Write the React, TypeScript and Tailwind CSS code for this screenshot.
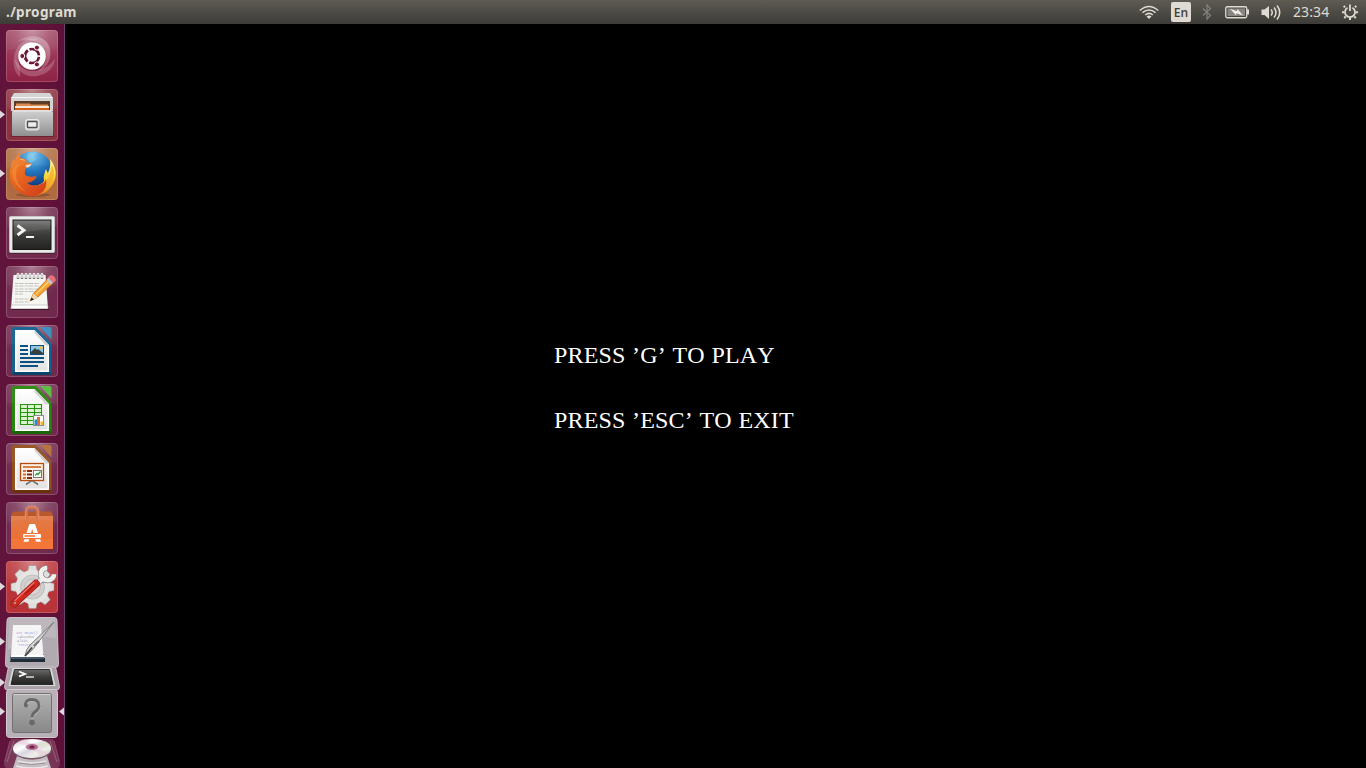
import type { ReactNode } from "react";

function Defs() {
  return (
    <svg className="absolute h-0 w-0" aria-hidden="true">
      <defs>
        <linearGradient id="silver" x1="0" y1="0" x2="0" y2="1">
          <stop offset="0" stopColor="#d2d2d2" />
          <stop offset="1" stopColor="#909090" />
        </linearGradient>
        <linearGradient id="paper" x1="0" y1="0" x2="0" y2="1">
          <stop offset="0" stopColor="#ffffff" />
          <stop offset="1" stopColor="#e2e2e2" />
        </linearGradient>
        <linearGradient id="screen" x1="0" y1="0" x2="0" y2="1">
          <stop offset="0" stopColor="#6a6a68" />
          <stop offset="0.5" stopColor="#3c3c3a" />
          <stop offset="1" stopColor="#222221" />
        </linearGradient>
        <radialGradient id="gloss" cx="0.5" cy="0" r="0.65">
          <stop offset="0" stopColor="#fff" stopOpacity="0.38" />
          <stop offset="0.5" stopColor="#fff" stopOpacity="0.12" />
          <stop offset="1" stopColor="#fff" stopOpacity="0" />
        </radialGradient>
        <radialGradient id="globe" cx="0.5" cy="0.1" r="0.75">
          <stop offset="0" stopColor="#72c4ee" />
          <stop offset="0.5" stopColor="#2579c0" />
          <stop offset="1" stopColor="#0c3a80" />
        </radialGradient>
        <linearGradient id="fox" x1="0" y1="0" x2="0.7" y2="1">
          <stop offset="0" stopColor="#f18a30" />
          <stop offset="0.45" stopColor="#ea6a20" />
          <stop offset="1" stopColor="#d3431c" />
        </linearGradient>
        <linearGradient id="flame" x1="0" y1="0" x2="0" y2="1">
          <stop offset="0" stopColor="#fff3a0" />
          <stop offset="0.5" stopColor="#fbd538" />
          <stop offset="1" stopColor="#ee7820" />
        </linearGradient>
        <linearGradient id="bag" x1="0" y1="0" x2="0" y2="1">
          <stop offset="0" stopColor="#e07b48" />
          <stop offset="1" stopColor="#f06c2c" />
        </linearGradient>
        <linearGradient id="dashBase" x1="0" y1="0" x2="0" y2="1">
          <stop offset="0" stopColor="#a04a66" />
          <stop offset="0.5" stopColor="#9b3555" />
          <stop offset="1" stopColor="#8d2344" />
        </linearGradient>
        <linearGradient id="swirl" x1="0" y1="1" x2="1" y2="0">
          <stop offset="0" stopColor="#fff" stopOpacity="0.02" />
          <stop offset="1" stopColor="#fff" stopOpacity="0.38" />
        </linearGradient>
        <linearGradient id="question" x1="0" y1="0" x2="0" y2="1">
          <stop offset="0" stopColor="#b2b2b2" />
          <stop offset="1" stopColor="#888888" />
        </linearGradient>
        <linearGradient id="disc" x1="0" y1="0" x2="1" y2="1">
          <stop offset="0" stopColor="#d0d0d0" />
          <stop offset="0.35" stopColor="#ffffff" />
          <stop offset="0.5" stopColor="#d9d6e2" />
          <stop offset="0.7" stopColor="#f0f0e8" />
          <stop offset="1" stopColor="#c2c2c2" />
        </linearGradient>
      </defs>
    </svg>
  );
}

function Tile({ fill, opacity = 1, running = false, children }: { fill: string; opacity?: number; running?: boolean; children: ReactNode }) {
  return (
    <svg viewBox="0 0 64 52" className="block h-[52px] w-16 shrink-0">
      <rect x="6" y="0" width="52" height="52" rx="3.5" fill={fill} fillOpacity={opacity} />
      <rect x="6" y="0" width="52" height="52" rx="3.5" fill="url(#gloss)" />
      {children}
      <path d="M7 20V4q0-3.5 3.500-3.500h43q3.500 0 3.500 3.500v16Q32 14 7 20z" fill="#fff" fillOpacity="0.05" />
      <rect x="6.500" y="0.500" width="51" height="51" rx="3.500" fill="none" stroke="#fff" strokeOpacity="0.18" />
      {running && <path d="M0 21.500L5 25.500L0 29.500z" fill="#dcd8dc" />}
    </svg>
  );
}

function Dash() {
  return (
    <Tile fill="url(#dashBase)">
      <path d="M16 13C25 4 42 4 48 14C54 25 48 38 38 42C47 33 47 20 39 14C32 9 22 9 16 13z" fill="url(#swirl)" />
      <path d="M20 47C12 41 11 24 20 14C25 9 33 7 38 10C27 11 19 19 19 29C19 37 21 43 20 47z" fill="#fff" fillOpacity="0.2" />
      <path d="M55 29C54 41 41 48 29 46C20 44 15 36 15 29C20 38 29 43 39 40C48 38 51 33 55 29z" fill="#fff" fillOpacity="0.2" />
      <circle cx="32" cy="26.700" r="14.300" fill="#5b0b2c" fillOpacity="0.35" />
      <circle cx="32" cy="26" r="13.800" fill="#fff" />
      <circle cx="32" cy="26" r="7" fill="none" stroke="#6b1437" strokeWidth="2.700" strokeDasharray="12.900 1.760" strokeDashoffset="-0.900" />
      <g fill="#6b1437" stroke="#fff" strokeWidth="1">
        <circle cx="22.300" cy="26" r="2.500" />
        <circle cx="36.900" cy="17.600" r="2.500" />
        <circle cx="36.900" cy="34.400" r="2.500" />
      </g>
    </Tile>
  );
}

function Files() {
  return (
    <Tile fill="#8c3240" running>
      <rect x="11" y="45" width="43" height="3" rx="1" fill="#000" fillOpacity="0.25" />
      <path d="M14 4h36l3 5v13H11V9z" fill="#d2d2d2" />
      <path d="M11.500 8h41v1h-41z" fill="#f5f5f5" />
      <path d="M14 12h36v10H14z" fill="#54341c" />
      <path d="M16 14.500h14l1 1h17v7H16z" fill="#db8648" />
      <path d="M15 17h34v2H15z" fill="#f3eada" />
      <path d="M15 19h34v3H15z" fill="#d65f18" />
      <path d="M13 21h38l2 2v24H12V23z" fill="url(#silver)" />
      <path d="M13 21.500h38v1H13z" fill="#ededed" />
      <rect x="25.500" y="30.500" width="13.500" height="10.500" rx="2" fill="#d5d5d5" stroke="#f0f0f0" strokeWidth="0.800" />
      <rect x="27.500" y="32.500" width="9.500" height="6" rx="0.500" fill="#eee" stroke="#4f4f4f" strokeWidth="1.300" />
    </Tile>
  );
}

function Firefox() {
  return (
    <Tile fill="#b06b40" running>
      <ellipse cx="33" cy="47" rx="17" ry="2" fill="#000" fillOpacity="0.18" />
      <circle cx="32.500" cy="24" r="20.500" fill="url(#globe)" />
      <path d="M28 5q6-2 10 0l-4 3 2 3-5 4-4-4z" fill="#a6dcf2" fillOpacity="0.35" />
      <path d="M50 11Q61 25 51 39Q42 50 30 47L30 38Q41 38 44 33Q43 28 46 21Q47 24 48 25Q51 19 50 11z" fill="url(#flame)" />
      <path d="M52 17Q57 28 50 38Q44 44 37 45Q50 33 52 17z" fill="#f0a32a" fillOpacity="0.6" />
      <path d="M19.500 5Q19 9 21.500 10.500Q24 10 26.500 12Q26 13.500 27 14.500Q31 14.500 31.500 16Q30 19 26 20Q24 23 25 27Q30 30 36 28Q37 30 34 32Q31 35 27 35Q34 40 43 35Q45 34 46 31Q48 41 40 46Q29 51 20 45Q8 37 10 22Q11 14 14 10Q14 12 15 13Q16 8 19.500 5z" fill="url(#fox)" />
      <path d="M25.500 17Q28 17 31.500 15.700Q31 19 26.500 19.500z" fill="#f8e3ca" />
      <path d="M12 24q1 14 14 20-11-9-10-19 0-5 4-9-7 1-8 8z" fill="#f9a34a" fillOpacity="0.4" />
      <path d="M20.500 11.500q2-.5 4 1" stroke="#fbb866" strokeWidth="1" fill="none" />
    </Tile>
  );
}

function Terminal() {
  return (
    <Tile fill="#fff" opacity={0.1}>
      <rect x="9" y="9" width="46" height="38" rx="1.500" fill="#151515" fillOpacity="0.35" />
      <rect x="9.500" y="9.500" width="45" height="36" rx="1" fill="#e9e9e9" stroke="#c1c1c1" />
      <rect x="13" y="13" width="38" height="29.500" fill="url(#screen)" stroke="#171717" />
      <path d="M14 14h36v8Q30 23 14 29z" fill="#fff" fillOpacity="0.08" />
      <path d="M17.500 18.500L24 23.200L17.500 28" fill="none" stroke="#f4f4f4" strokeWidth="2.800" />
      <path d="M26 30h8" stroke="#f4f4f4" strokeWidth="2" />
    </Tile>
  );
}

const notes = [17.500, 20, 23, 25.500, 28, 33, 36];
const rings = [18, 22, 26, 30, 34, 38, 42];

function Gedit() {
  return (
    <Tile fill="#fff" opacity={0.1}>
      <path d="M11 42h38v2H11z" fill="#000" fillOpacity="0.4" />
      <path d="M13.500 9h32l2.500 34H11z" fill="#f5f5f2" />
      <path d="M11.500 39h36l.5 3.500H11z" fill="#fff" stroke="#b8bab5" strokeWidth="0.700" />
      {notes.map((y, i) => (
        <path key={y} d={`M15 ${y}h${i === 4 ? 8 : i > 4 ? 14 : 24}`} stroke="#b2b2b0" strokeDasharray="3 0.7 5 1" strokeWidth="0.800" />
      ))}
      {rings.map((x) => (
        <g key={x}>
          <circle cx={x} cy="11.500" r="1.500" fill="#666" />
          <path d={`M${x - 1} 12V8.500q1-2.500 2 0V12`} fill="#999" stroke="#efefef" strokeWidth="1.200" />
        </g>
      ))}
      <path d="M30 35L33.500 27.500L48 12.500L53 17L38 31z" fill="#f5a12f" stroke="#b66613" strokeWidth="0.700" />
      <path d="M36 28L50 14.500" stroke="#ffd17a" strokeWidth="1.500" />
      <path d="M30 35l3.500-7.500 4.500 4z" fill="#eed6a9" />
      <path d="M30 35l1.500-3.500 2.500 2z" fill="#222" />
      <path d="M46.500 14l2-2.500 5 4.500-2.500 2.500z" fill="#b9c5cf" />
      <path d="M48 11.500q3-4 6-1t1 5l-2 1.500z" fill="#e56d70" />
    </Tile>
  );
}

function Sheet({ color, dark, corner, children }: { color: string; dark: string; corner: string; children: ReactNode }) {
  return (
    <Tile fill="#fff" opacity={0.1}>
      <path d="M14 2h22L51.500 18.500V48q0 2-2.500 2H14.500Q12 50 12 48V4q0-2 2-2z" fill={color} />
      <path d="M12 47h39.500v1q0 2-2.500 2H14.500Q12 50 12 48z" fill={dark} />
      <path d="M15 5h19.500L49 20v27H15z" fill="#fff" />
      <path d="M16.500 6.500h18L47.500 20.500V45.500h-31z" fill="url(#paper)" />
      <path d="M34.500 5v3L46 20.500h3z" fill="#cfcfcf" />
      <path d="M40 2h9.500q2 0 2 2v10.500z" fill={corner} />
      {children}
    </Tile>
  );
}

function Writer() {
  return (
    <Sheet color="#13608e" dark="#0b4468" corner="#398bbd">
      <path d="M20 21h8M20 25h8M20 29h8M20 33h24M20 37h24M20 41h18" stroke="#0c5181" strokeWidth="2" />
      <rect x="30.500" y="20.500" width="13" height="9" fill="#8dc5e5" stroke="#104f7d" />
      <path d="M31 29v-2l4-4 2 2 1-1 5 4v1z" fill="#37403c" />
      <circle cx="41" cy="22.500" r="1.500" fill="#f5c233" />
    </Sheet>
  );
}

function Calc() {
  return (
    <Sheet color="#27860c" dark="#196606" corner="#56b83d">
      <rect x="20.500" y="20.500" width="21" height="20" fill="#d9f4ce" />
      <path d="M20.500 20.500h21v20h-21zM27.500 20v21M34.500 20v21M20 24.500h22M20 28.500h22M20 32.500h22M20 36.500h22" fill="none" stroke="#28920e" strokeWidth="1.100" />
      <rect x="33.500" y="31.500" width="10" height="10" fill="#fff" stroke="#8a8b94" />
      <path d="M34.500 35.500h2.500v5.500h-2.500z" fill="#278bd0" />
      <path d="M37 33h3v8h-3z" fill="#e46b35" />
      <path d="M40.500 37.500H43V41h-2.500z" fill="#f5bd24" />
    </Sheet>
  );
}

function Impress() {
  return (
    <Sheet color="#93501c" dark="#69320c" corner="#b26d36">
      <path d="M26 41.500l5-3.500h2l5 3.500" fill="none" stroke="#737373" strokeWidth="1.600" />
      <rect x="20.500" y="20.500" width="23" height="17" fill="#fbf1e8" stroke="#b34b13" strokeWidth="1.300" />
      <path d="M23 24h18" stroke="#d78148" strokeWidth="2" />
      <path d="M23 28h3M23 31.500h3M23 35h3" stroke="#e36d2d" strokeWidth="2" />
      <path d="M27 28h5M27 31.500h5M27 35h5" stroke="#793213" strokeWidth="2" />
      <rect x="33.500" y="27.500" width="8" height="7" fill="#fff" stroke="#777" />
      <path d="M35 32.500l2-2 1 1 2.500-3" fill="none" stroke="#2c9d34" strokeWidth="1.200" />
    </Sheet>
  );
}

function Software() {
  return (
    <Tile fill="#fff" opacity={0.1}>
      <path d="M13 9.500h38l2 4v3H11v-3z" fill="#b65022" />
      <path d="M11 14h42v33H11z" fill="url(#bag)" />
      <path d="M11 37h42v10H11z" fill="#f77c3d" fillOpacity="0.6" />
      <path d="M26.500 17V10q0-4.500 4-4.500h3q4 0 4 4.500v7" fill="none" stroke="#d56d43" strokeWidth="2.600" />
      <path d="M25.300 17V10q0-5.700 5-5.700h3.500q5 0 5 5.700v7" fill="none" stroke="#eb9b78" strokeWidth="0.700" />
      <path d="M29.500 22h5.500l6 17.800h-5L32.200 27L28.500 39.800h-5z" fill="#fff" />
      <path d="M21 31h22v6.200H21z" fill="#f0743a" />
      <rect x="23" y="32" width="18" height="4" rx="1" fill="#fff" />
      <path d="M24.500 34h10.500" stroke="#f27838" strokeWidth="1.600" />
    </Tile>
  );
}

const teeth = [0, 45, 90, 135, 180, 225, 270, 315];

function Settings() {
  return (
    <Tile fill="#b93439" running>
      <g fill="#dededc" stroke="#92928f" strokeWidth="0.600">
        {teeth.map((angle) => (
          <path key={angle} d="M27.500 11L29 4.500h7l1.500 6.500z" transform={`rotate(${angle} 32.500 26)`} />
        ))}
      </g>
      <circle cx="32.500" cy="26" r="17" fill="#e4e4e2" />
      <circle cx="32.500" cy="26" r="12" fill="#cfcfcd" stroke="#b0b0ae" strokeWidth="0.700" />
      <circle cx="32.500" cy="26" r="8" fill="#dcd2d1" stroke="#b9b3b2" strokeWidth="0.700" />
      <g fill="none" strokeLinecap="round">
        <path d="M34 25L43 17.500" stroke="#7f7f7f" strokeWidth="5.800" />
        <path d="M47.500 7C41 7 39 13 42.500 17.500C47.500 21.500 54 18.500 54 13" stroke="#777" strokeWidth="5.600" strokeLinecap="butt" />
        <path d="M34 25L43 17.500" stroke="#eee" strokeWidth="4.400" />
        <path d="M47.200 7C41 7 39 13 42.500 17.500C47.500 21.500 54 18.500 54 13.300" stroke="#f0f0ef" strokeWidth="4.400" strokeLinecap="butt" />
        <path d="M14.500 42.500L36 22.500" stroke="#8e1b17" strokeWidth="7.600" />
        <path d="M14.500 42.500L36 22.500" stroke="#cf2921" strokeWidth="6.400" />
        <path d="M15 39.500L34 21.500" stroke="#ee746c" strokeWidth="1.300" />
        <path d="M25 33L34 24.500" stroke="#ab1813" strokeWidth="1.600" />
      </g>
      <circle cx="15" cy="42" r="1.300" fill="#f4dedc" stroke="#8e2018" strokeWidth="0.700" />
    </Tile>
  );
}

function FoldedStack() {
  return (
    <svg viewBox="0 616 64 152" className="mt-[3px] block h-[152px] w-16 shrink-0">
      <path d="M10 617.500h44q3 0 3 3l1.500 44q0 3-3 3H8.500q-3 0-3-3l1.500-44q0-3 3-3z" fill="#b2aab1" stroke="#d3cbd2" strokeWidth="0.900" />
      <path d="M9 618h46l1 20Q28 634 8 650z" fill="#fff" fillOpacity="0.15" />
      <path d="M11 658h34v4H10z" fill="#202c36" />
      <path d="M11 654h33v5H10z" fill="#46586a" />
      <path d="M13 625h28l2.500 32H11z" fill="#f5f5f5" />
      <path d="M11 655h33v2H11z" fill="#fff" />
      <g fontFamily="Liberation Mono, monospace" fontSize="3.600" fill="#a1a1ad">
        <text x="16" y="634" fill="#9a9ce0">int main()</text>
        <text x="17" y="638">#Abandon</text>
        <text x="17" y="642">Alibi</text>
        <text x="18" y="646" fill="#9a9ce0">return</text>
      </g>
      <path d="M25 656Q26 649 30 645L54 622L33 649Q30 653 25 656z" fill="#d2d2d2" stroke="#6f7275" strokeWidth="0.900" />
      <path d="M25 656l7-8.500" stroke="#3d4146" strokeWidth="1.500" />
      <path d="M34 646l5-5" stroke="#777" strokeWidth="2" />

      <path d="M10 667h44q2 0 2 2l3.500 18q0 3-3 3H7.500q-3 0-3-3l3.500-18q0-2 2-2z" fill="#aaa1a8" stroke="#cfc6cd" strokeWidth="0.900" />
      <path d="M12.500 668h39l4 18H8.500z" fill="#d8d8d8" />
      <path d="M14.500 669.500h35l3.500 15H11z" fill="url(#screen)" stroke="#151515" strokeWidth="0.800" />
      <path d="M19 671.500l6 2.500-6 2.300" fill="none" stroke="#fff" strokeWidth="1.800" />
      <path d="M26 677h8" stroke="#ddd" strokeWidth="1.500" />

      <rect x="6.500" y="689.500" width="51" height="48" rx="3" fill="#b8b0b6" stroke="#d2cbd0" />
      <rect x="12.500" y="693.500" width="39" height="39" rx="2" fill="url(#question)" stroke="#717171" />
      <path d="M14 694.500h36" stroke="#d2d2d2" />
      <path d="M25.500 706q-.5-6.500 6-6.500 7.500 0 7.500 6.500 0 3-3.500 5.500-3.500 2.500-3.500 6" fill="none" stroke="#bdbdbd" strokeWidth="2.600" transform="translate(.3 1)" />
      <path d="M25.500 706q-.5-6.500 6-6.500 7.500 0 7.500 6.500 0 3-3.500 5.500-3.500 2.500-3.500 6" fill="none" stroke="#686868" strokeWidth="2.800" />
      <circle cx="26" cy="705.500" r="2" fill="#686868" />
      <circle cx="32" cy="722.500" r="2.800" fill="#686868" />

      <path d="M11 739h42l7 25q0 3-3 4H7q-3-1-3-4z" fill="#d8c2ce" fillOpacity="0.2" />
      <path d="M10 741l-5.500 21M14 741l-7 21M54 741l5.500 21M50 741l7 21" stroke="#e1cdd8" strokeOpacity="0.3" />
      <path d="M17 756Q32 763 47 756l4 12H13z" fill="#c4bcc1" />
      <path d="M18 761q14 4 28 0M16 766q16 4 32 0" fill="none" stroke="#e9e6e8" strokeWidth="1.500" />
      <path d="M19 763q12 3 26 0" fill="none" stroke="#8d878b" strokeWidth="0.800" />
      <ellipse cx="32" cy="750" rx="19.300" ry="9.500" fill="#777" fillOpacity="0.6" />
      <ellipse cx="32" cy="748.500" rx="19" ry="9.500" fill="url(#disc)" />
      <path d="M32 747L16 743q4-3 9-4zM32 747l16 5q-2 3-7 5z" fill="#e7c4d8" fillOpacity="0.5" />
      <path d="M32 747l13-6q5 2 6 6z" fill="#e0e8c5" fillOpacity="0.5" />
      <ellipse cx="32" cy="747" rx="6.500" ry="3.500" fill="#b96b93" stroke="#ddd" />
      <ellipse cx="32" cy="747" rx="2.800" ry="1.500" fill="#6b264c" />

      <g fill="#dcd8dc">
        <path d="M0 637.500l5 4-5 4zM0 678.500l5 4-5 4zM0 707.500l5 4-5 4zM64 707.500l-5 4 5 4z" />
      </g>
    </svg>
  );
}

function Launcher() {
  return (
    <nav className="flex h-[744px] w-[65px] shrink-0 flex-col gap-[7px] overflow-hidden border-r border-[#70406d] bg-linear-to-r from-[#60143c] via-[#651338] to-[#5c1038] pt-1.5">
      <Dash />
      <Files />
      <Firefox />
      <Terminal />
      <Gedit />
      <Writer />
      <Calc />
      <Impress />
      <Software />
      <Settings />
      <div className="-mt-[7px]">
        <FoldedStack />
      </div>
    </nav>
  );
}

function Indicators() {
  return (
    <div className="flex h-full items-center text-[#dfdbd2]">
      <svg className="h-6 w-5" viewBox="0 0 20 24" fill="none" stroke="currentColor" strokeWidth="1.600">
        <path d="M0.800 10.500Q10 2.500 19.200 10.500M3.500 12.700Q10 7.300 16.500 12.700M6.200 15Q10 11.800 13.800 15" />
        <path d="M7.500 16.500Q10 14.600 12.500 16.500L10 19z" fill="currentColor" stroke="none" />
      </svg>
      <div className="ml-3 flex h-5 w-5 items-center justify-center rounded-xs bg-[#dfdbd2] pt-0.5 font-['Open_Sans','Noto_Sans',sans-serif] text-[12px] leading-5 font-semibold text-[#3f3e39]">En</div>
      <svg className="ml-[11px] h-6 w-2.5" viewBox="0 0 10 24" fill="none" stroke="#85827a" strokeWidth="1.200">
        <path d="M1 8.500L8.500 15.500L5 19V5L8.500 8.500L1 15.500" />
      </svg>
      <svg className="ml-[13px] h-6 w-6" viewBox="0 0 24 24">
        <rect x="0.750" y="6.750" width="21" height="11" rx="1.500" fill="none" stroke="#dfdbd2" strokeWidth="1.300" />
        <rect x="2.500" y="8.500" width="17.500" height="7.500" fill="#88867f" />
        <path d="M22 9.500h2v5h-2z" fill="#dfdbd2" />
        <path d="M5 8.700l7 2.500 .5-2.200L18 15.500l-6.500-2.300-.5 2z" fill="#f0eee8" />
      </svg>
      <svg className="ml-3 h-6 w-5" viewBox="0 0 20 24" fill="none" stroke="currentColor">
        <path d="M0.500 9.500h3L8 6v13l-4.500-4h-3z" fill="currentColor" stroke="none" />
        <path d="M10 9.500q2.500 3 0 6M13 7.500q4 5 0 10M16 5.500q5.500 7 0 14" strokeWidth="1.500" />
      </svg>
      <span className="ml-3 w-[37px] font-['Noto_Sans',sans-serif] text-[14px] leading-6 tracking-[0.1px]">23:34</span>
      <svg className="ml-[11px] h-6 w-[18px]" viewBox="0 0 18 24" fill="none" stroke="currentColor">
        <path d="M6.500 7.800a5 5 0 1 0 5 0" strokeWidth="1.700" />
        <path d="M9 4.500V11" strokeWidth="1.800" />
        <path d="M4 7.200L2.700 5.900M3.500 12.200H1M4.700 16.500L3.200 18M9 17.500V20M13.300 16.500l1.500 1.500M14.500 12.200H17M14 7.200l1.300-1.300" strokeWidth="2" />
      </svg>
    </div>
  );
}

export default function App() {
  return (
    <div className="flex h-screen w-screen flex-col overflow-hidden bg-black">
      <Defs />
      <header className="flex h-6 shrink-0 items-center justify-between bg-linear-to-b from-[#5e5b52] to-[#3d3c38] pr-[7px] pl-1.5">
        <h1 className="font-['Noto_Sans',sans-serif] text-[13.5px] leading-6 font-bold tracking-[0.35px] text-[#dfdbd2]">./program</h1>
        <Indicators />
      </header>
      <div className="flex min-h-0 flex-1">
        <Launcher />
        <main className="flex-1 bg-black pt-[313px] pl-[489px] font-['Liberation_Serif',serif] text-[24px] leading-[36px] tracking-[0.15px] text-white [font-kerning:none] [word-spacing:0.500px]">
          <p className="w-max">PRESS ’G’ TO PLAY</p>
          <p className="mt-[29px] w-max">PRESS ’ESC’ TO EXIT</p>
        </main>
      </div>
    </div>
  );
}
